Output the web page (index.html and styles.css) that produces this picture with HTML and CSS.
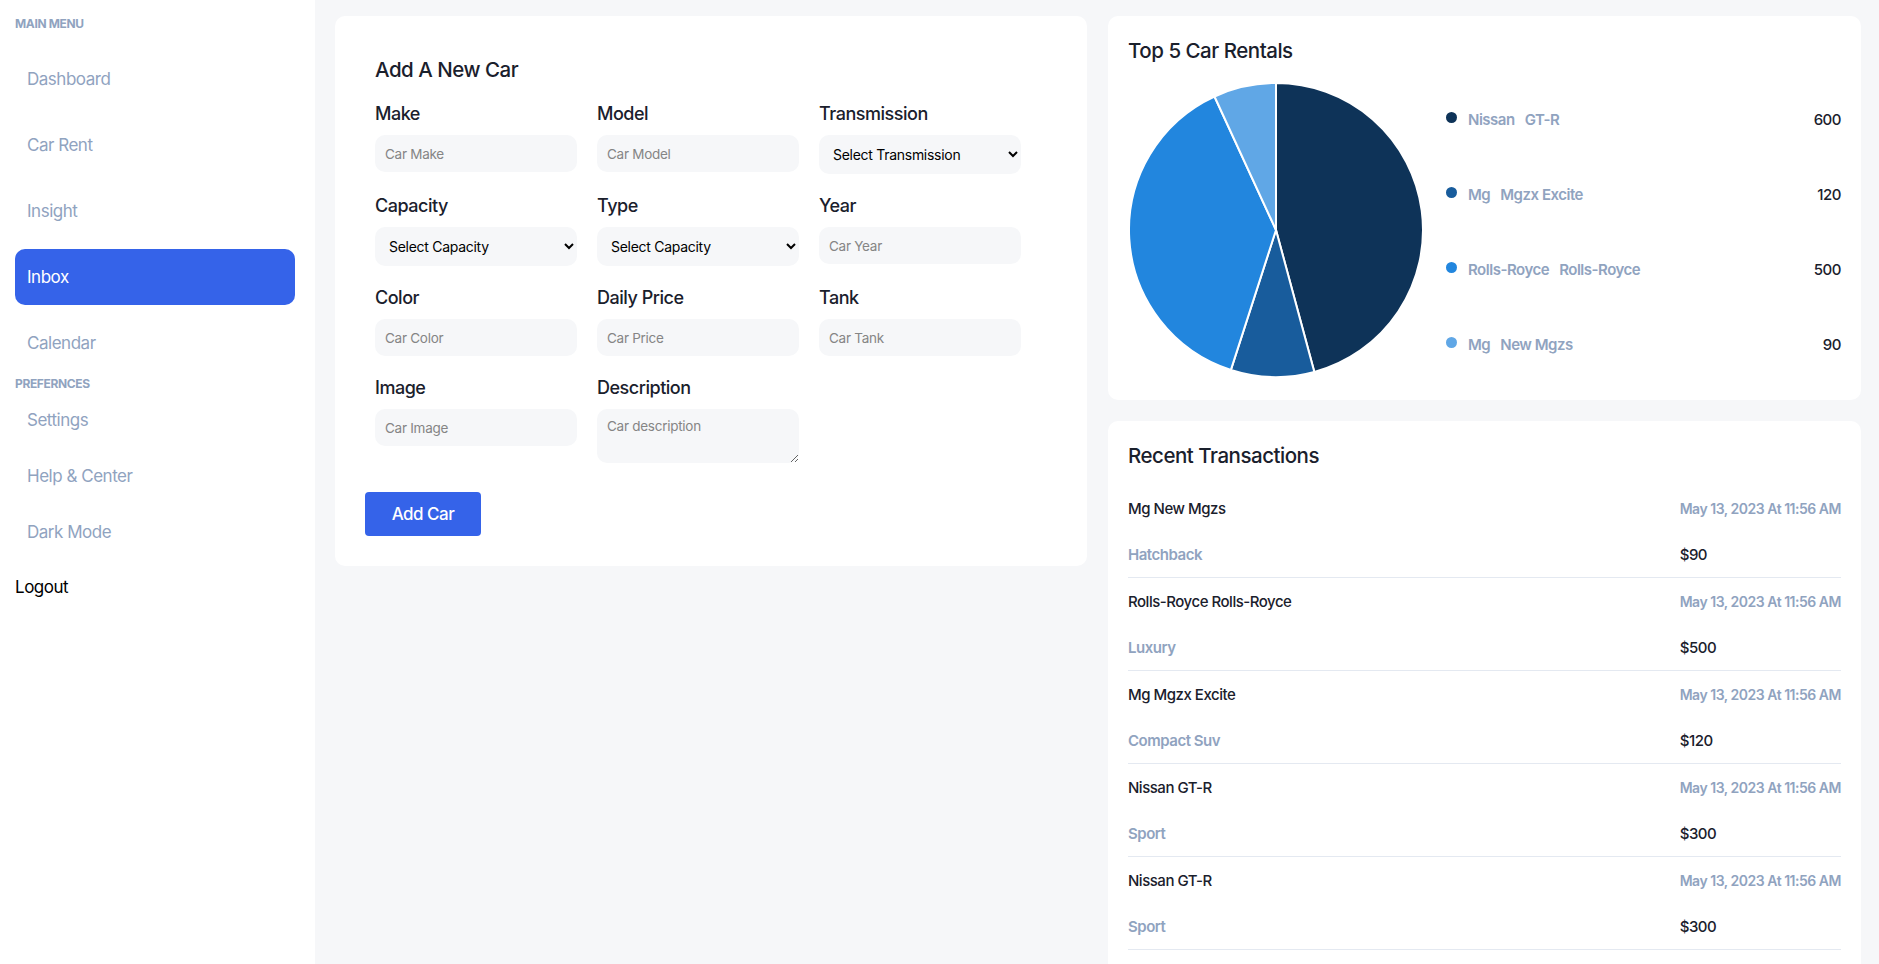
FILE: index.html
```html
<!DOCTYPE html>
<html lang="en">
<head>
<meta charset="utf-8">
<title>Add Car</title>
<link rel="stylesheet" href="styles.css">
</head>
<body>
<div class="app">
  <aside class="sidebar">
    <div class="section-label">Main Menu</div>
    <nav class="menu menu-main">
      <a class="menu-item">Dashboard</a>
      <a class="menu-item">Car Rent</a>
      <a class="menu-item">Insight</a>
      <a class="menu-item active">Inbox</a>
      <a class="menu-item">Calendar</a>
    </nav>
    <div class="section-label section-label-pref">Prefernces</div>
    <nav class="menu">
      <a class="menu-item">Settings</a>
      <a class="menu-item">Help &amp; Center</a>
      <a class="menu-item">Dark Mode</a>
    </nav>
    <a class="menu-item logout">Logout</a>
  </aside>

  <main class="main">
    <section class="card form-card">
      <h2 class="card-title">Add A New Car</h2>
      <form class="form-grid">
        <div class="field">
          <label class="field-label">Make</label>
          <input class="control" type="text" placeholder="Car Make">
        </div>
        <div class="field">
          <label class="field-label">Model</label>
          <input class="control" type="text" placeholder="Car Model">
        </div>
        <div class="field">
          <label class="field-label">Transmission</label>
          <select class="control select"><option>Select Transmission</option></select>
        </div>
        <div class="field">
          <label class="field-label">Capacity</label>
          <select class="control select"><option>Select Capacity</option></select>
        </div>
        <div class="field">
          <label class="field-label">Type</label>
          <select class="control select"><option>Select Capacity</option></select>
        </div>
        <div class="field">
          <label class="field-label">Year</label>
          <input class="control" type="text" placeholder="Car Year">
        </div>
        <div class="field">
          <label class="field-label">Color</label>
          <input class="control" type="text" placeholder="Car Color">
        </div>
        <div class="field">
          <label class="field-label">Daily Price</label>
          <input class="control" type="text" placeholder="Car Price">
        </div>
        <div class="field">
          <label class="field-label">Tank</label>
          <input class="control" type="text" placeholder="Car Tank">
        </div>
        <div class="field">
          <label class="field-label">Image</label>
          <input class="control" type="text" placeholder="Car Image">
        </div>
        <div class="field">
          <label class="field-label">Description</label>
          <textarea class="control textarea" placeholder="Car description"></textarea>
        </div>
      </form>
      <button class="btn-primary" type="button">Add Car</button>
    </section>

    <div class="right-col">
      <section class="card rentals-card">
        <h2 class="card-title">Top 5 Car Rentals</h2>
        <div class="chart-area">
          <svg class="pie" width="296" height="296" viewBox="0 0 296 296">
            <g stroke="#ffffff" stroke-width="2" stroke-linejoin="round">
              <path fill="#0E3358" d="M148,148 L148,1 A147,147 0 0 1 186.34,289.91 Z"/>
              <path fill="#185C9C" d="M148,148 L186.34,289.91 A147,147 0 0 1 102.90,287.91 Z"/>
              <path fill="#2286DE" d="M148,148 L102.90,287.91 A147,147 0 0 1 86.50,14.48 Z"/>
              <path fill="#60A7E6" d="M148,148 L86.50,14.48 A147,147 0 0 1 148,1 Z"/>
            </g>
          </svg>
          <ul class="legend">
            <li class="legend-row"><span class="dot dot-1"></span><span class="legend-name">Nissan</span><span class="legend-name legend-model">GT-R</span><span class="legend-value">600</span></li>
            <li class="legend-row"><span class="dot dot-2"></span><span class="legend-name">Mg</span><span class="legend-name legend-model">Mgzx Excite</span><span class="legend-value">120</span></li>
            <li class="legend-row"><span class="dot dot-3"></span><span class="legend-name">Rolls-Royce</span><span class="legend-name legend-model">Rolls-Royce</span><span class="legend-value">500</span></li>
            <li class="legend-row"><span class="dot dot-4"></span><span class="legend-name">Mg</span><span class="legend-name legend-model">New Mgzs</span><span class="legend-value">90</span></li>
          </ul>
        </div>
      </section>

      <section class="card tx-card">
        <h2 class="card-title">Recent Transactions</h2>
        <div class="tx-list">
          <div class="tx">
            <span class="tx-name">Mg New Mgzs</span><span class="tx-date">May 13, 2023 At 11:56 AM</span>
            <span class="tx-type">Hatchback</span><span class="tx-price">$90</span>
          </div>
          <div class="tx">
            <span class="tx-name">Rolls-Royce Rolls-Royce</span><span class="tx-date">May 13, 2023 At 11:56 AM</span>
            <span class="tx-type">Luxury</span><span class="tx-price">$500</span>
          </div>
          <div class="tx">
            <span class="tx-name">Mg Mgzx Excite</span><span class="tx-date">May 13, 2023 At 11:56 AM</span>
            <span class="tx-type">Compact Suv</span><span class="tx-price">$120</span>
          </div>
          <div class="tx">
            <span class="tx-name">Nissan GT-R</span><span class="tx-date">May 13, 2023 At 11:56 AM</span>
            <span class="tx-type">Sport</span><span class="tx-price">$300</span>
          </div>
          <div class="tx">
            <span class="tx-name">Nissan GT-R</span><span class="tx-date">May 13, 2023 At 11:56 AM</span>
            <span class="tx-type">Sport</span><span class="tx-price">$300</span>
          </div>
        </div>
      </section>
    </div>
  </main>
</div>
</body>
</html>
```

FILE: styles.css
```css
* { box-sizing: border-box; }

html, body {
  margin: 0;
  padding: 0;
  height: 100%;
  overflow: hidden;
}

body {
  font-family: Inter, "Noto Sans", sans-serif;
  color: #1A202C;
  background: #F6F7F9;
  letter-spacing: -0.03em;
}

.app {
  display: flex;
  min-height: 100vh;
}

/* Sidebar */
.sidebar {
  width: 315px;
  flex: none;
  background: #ffffff;
  padding: 16px 20px 0 15px;
  display: flex;
  flex-direction: column;
}

.section-label {
  font-size: 12px;
  line-height: 16px;
  font-weight: 700;
  text-transform: uppercase;
  color: #90A3BF;
  letter-spacing: -0.03em;
}

.section-label-pref {
  margin-top: 5px;
}

.menu {
  display: flex;
  flex-direction: column;
}

.menu-main {
  margin-top: 19px;
  gap: 10px;
}

.menu-item {
  display: flex;
  align-items: center;
  height: 56px;
  padding-left: 12px;
  border-radius: 10px;
  font-size: 17px;
  color: #90A3BF;
  text-decoration: none;
}

.menu-item.active {
  background: #3563E9;
  color: #ffffff;
}

.menu-item.logout {
  padding-left: 0;
  height: 54px;
  color: #000000;
}

/* Main */
.main {
  flex: 1;
  padding: 16px 18px 0 20px;
  display: grid;
  grid-template-columns: 752px 753px;
  column-gap: 21px;
  align-items: start;
}

.card {
  background: #ffffff;
  border-radius: 10px;
}

.card-title {
  margin: 0;
  font-size: 20.5px;
  line-height: 26px;
  font-weight: 500;
  color: #1A202C;
}

/* Form card */
.form-card {
  padding: 40px 40px 30px 40px;
}

.form-card .card-title {
  line-height: 28px;
}

.form-grid {
  margin-top: 19px;
  display: grid;
  grid-template-columns: repeat(3, 202px);
  column-gap: 20px;
  row-gap: 21px;
  align-items: start;
}

.field {
  display: flex;
  flex-direction: column;
}

.field-label {
  font-size: 18px;
  line-height: 22px;
  font-weight: 500;
  margin-bottom: 10px;
  color: #1A202C;
}

.control {
  width: 100%;
  height: 37px;
  border: none;
  outline: none;
  border-radius: 10px;
  background: #F6F7F9;
  padding: 0 10px;
  font-family: inherit;
  font-size: 13.5px;
  letter-spacing: -0.02em;
  color: #1A202C;
}

.control::placeholder {
  color: #858585;
}

.select {
  height: 39px;
  color: #000000;
  font-size: 14px;
  padding-left: 10px;
  padding-right: 6px;
}

.textarea {
  height: 54px;
  padding-top: 9px;
  resize: vertical;
}

.btn-primary {
  margin: 29px 0 0 -10px;
  width: 116px;
  height: 44px;
  border: none;
  border-radius: 4px;
  background: #3563E9;
  color: #ffffff;
  font-family: inherit;
  font-size: 17px;
  letter-spacing: -0.03em;
  font-weight: 500;
}

/* Right column */
.right-col {
  display: flex;
  flex-direction: column;
  gap: 21px;
}

.rentals-card {
  padding: 22px 20px 18px 20px;
}

.chart-area {
  margin-top: 18px;
  display: flex;
  align-items: flex-start;
  gap: 22px;
}

.pie {
  flex: none;
  display: block;
}

.legend {
  flex: 1;
  list-style: none;
  margin: 0;
  padding: 0;
}

.legend-row {
  height: 75px;
  display: flex;
  align-items: center;
  font-size: 15px;
}

.dot {
  width: 11px;
  height: 11px;
  border-radius: 50%;
  margin-right: 11px;
  transform: translateY(-2px);
}

.dot-1 { background: #0E3358; }
.dot-2 { background: #185C9C; }
.dot-3 { background: #2286DE; }
.dot-4 { background: #60A7E6; }

.legend-name {
  color: #90A3BF;
  font-weight: 600;
}

.legend-model {
  margin-left: 10px;
}

.legend-value {
  margin-left: auto;
  color: #1A202C;
  font-weight: 500;
}

/* Transactions */
.tx-card {
  padding: 22px 20px 0 20px;
  min-height: 560px;
}

.tx-card .card-title {
  margin-bottom: 16px;
}

.tx {
  display: grid;
  grid-template-columns: 1fr auto;
  grid-auto-rows: 46px;
  align-items: center;
  border-bottom: 1px solid #E4E9F1;
  font-size: 15px;
}

.tx-name {
  font-weight: 500;
  color: #1A202C;
}

.tx-date {
  font-size: 14px;
  font-weight: 600;
  color: #90A3BF;
}

.tx-type {
  font-weight: 600;
  color: #90A3BF;
}

.tx-price {
  font-weight: 500;
  color: #1A202C;
}
```
